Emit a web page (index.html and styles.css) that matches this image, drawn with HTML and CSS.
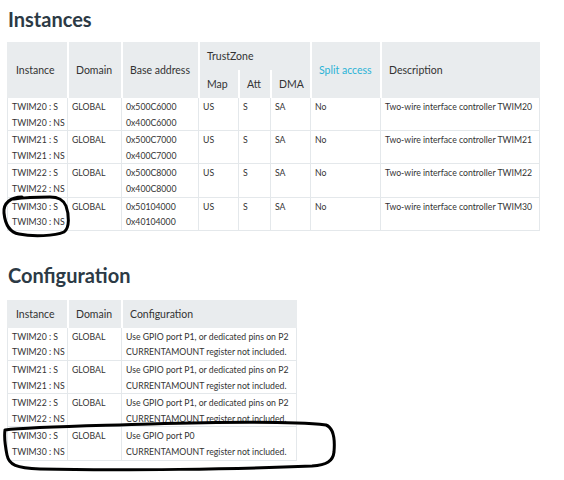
FILE: index.html
```html
<!DOCTYPE html>
<html>
<head>
<meta charset="utf-8">
<link rel="stylesheet" href="styles.css">
</head>
<body>
<div class="page">
  <h2 class="title">Instances</h2>
  <table class="grid grid-wide">
    <colgroup>
      <col class="c-inst"><col class="c-dom"><col class="c-base"><col class="c-map"><col class="c-att"><col class="c-dma"><col class="c-split"><col class="c-desc">
    </colgroup>
    <thead>
      <tr>
        <th rowspan="2" class="first">Instance</th>
        <th rowspan="2">Domain</th>
        <th rowspan="2">Base address</th>
        <th colspan="3" class="group">TrustZone</th>
        <th rowspan="2" class="link">Split access</th>
        <th rowspan="2">Description</th>
      </tr>
      <tr>
        <th class="sub">Map</th>
        <th class="sub">Att</th>
        <th class="sub">DMA</th>
      </tr>
    </thead>
    <tbody>
      <tr><td>TWIM20 : S<br>TWIM20 : NS</td><td>GLOBAL</td><td>0x500C6000<br>0x400C6000</td><td>US</td><td>S</td><td>SA</td><td>No</td><td>Two-wire interface controller TWIM20</td></tr>
      <tr><td>TWIM21 : S<br>TWIM21 : NS</td><td>GLOBAL</td><td>0x500C7000<br>0x400C7000</td><td>US</td><td>S</td><td>SA</td><td>No</td><td>Two-wire interface controller TWIM21</td></tr>
      <tr><td>TWIM22 : S<br>TWIM22 : NS</td><td>GLOBAL</td><td>0x500C8000<br>0x400C8000</td><td>US</td><td>S</td><td>SA</td><td>No</td><td>Two-wire interface controller TWIM22</td></tr>
      <tr><td>TWIM30 : S<br>TWIM30 : NS</td><td>GLOBAL</td><td>0x50104000<br>0x40104000</td><td>US</td><td>S</td><td>SA</td><td>No</td><td>Two-wire interface controller TWIM30</td></tr>
    </tbody>
  </table>

  <h2 class="title title-second">Configuration</h2>
  <table class="grid grid-narrow">
    <colgroup>
      <col class="c-inst"><col class="c-dom"><col class="c-conf">
    </colgroup>
    <thead>
      <tr><th class="first single">Instance</th><th class="single">Domain</th><th class="single">Configuration</th></tr>
    </thead>
    <tbody>
      <tr><td>TWIM20 : S<br>TWIM20 : NS</td><td>GLOBAL</td><td>Use GPIO port P1, or dedicated pins on P2<br>CURRENTAMOUNT register not included.</td></tr>
      <tr><td>TWIM21 : S<br>TWIM21 : NS</td><td>GLOBAL</td><td>Use GPIO port P1, or dedicated pins on P2<br>CURRENTAMOUNT register not included.</td></tr>
      <tr><td>TWIM22 : S<br>TWIM22 : NS</td><td>GLOBAL</td><td>Use GPIO port P1, or dedicated pins on P2<br>CURRENTAMOUNT register not included.</td></tr>
      <tr><td>TWIM30 : S<br>TWIM30 : NS</td><td>GLOBAL</td><td>Use GPIO port P0<br>CURRENTAMOUNT register not included.</td></tr>
    </tbody>
  </table>
</div>

<svg class="ink" width="564" height="480" viewBox="0 0 564 480" xmlns="http://www.w3.org/2000/svg">
  <path d="M 22 197 C 11 197, 3 203, 4 213 C 5 223, 8 232, 19 234 C 33 237, 55 236, 64 232 C 70 228, 69 214, 66 206 C 63 199, 58 197, 50 197 C 40 197, 28 197, 14 199" />
  <path d="M 5 430 C 30 427, 90 426, 150 424 C 220 422, 290 421, 326 425 C 334 428, 335 440, 334 452 C 333 461, 327 465, 312 466 C 240 469, 120 471, 40 469 C 16 468, 9 465, 7 455 C 5 445, 4 437, 5 430" />
</svg>
</body>
</html>
```

FILE: styles.css
```css
html, body {
  margin: 0;
  padding: 0;
  background: #ffffff;
}

body {
  font-family: Lato, "Open Sans", "Liberation Sans", sans-serif;
  color: #333333;
  position: relative;
  width: 564px;
  height: 480px;
  overflow: hidden;
}

.page {
  padding: 7px 0 0 7px;
}

.title {
  margin: 0 0 11px 1px;
  font-size: 20px;
  line-height: 24px;
  font-weight: 700;
  color: #2c3a45;
}

.title-second {
  margin-top: 32px;
  margin-bottom: 13px;
}

.grid {
  border-collapse: separate;
  border-spacing: 0;
  table-layout: fixed;
}

.grid-wide { width: 533px; }
.grid-narrow { width: 290px; }

.c-inst { width: 60px; }
.c-dom { width: 54px; }
.c-base { width: 77px; }
.c-map { width: 40px; }
.c-att { width: 32px; }
.c-dma { width: 40px; }
.c-split { width: 70px; }
.c-desc { width: 160px; }
.c-conf { width: 176px; }

.grid th {
  background: #e9ecee;
  font-weight: 400;
  font-size: 10.5px;
  text-align: left;
  vertical-align: middle;
  padding: 0 4px 0 7px;
  height: 28px;
  border-left: 2px solid #ffffff;
  color: #333333;
  white-space: nowrap;
}

.grid th.first {
  border-left: 0;
  padding-left: 9px;
}

.grid th.link {
  color: #2bb3d6;
}

.grid td {
  font-size: 8.7px;
  line-height: 15.6px;
  padding: 1px 4px 0 4px;
  vertical-align: top;
  border-left: 1px solid #e4e8eb;
  border-bottom: 1px solid #e4e8eb;
  white-space: nowrap;
  color: #333333;
}

.grid td:last-child {
  border-right: 1px solid #e4e8eb;
}

.ink {
  position: absolute;
  left: 0;
  top: 0;
  pointer-events: none;
}

.ink path {
  fill: none;
  stroke: #000000;
  stroke-width: 3;
  stroke-linecap: round;
  stroke-linejoin: round;
}
```
